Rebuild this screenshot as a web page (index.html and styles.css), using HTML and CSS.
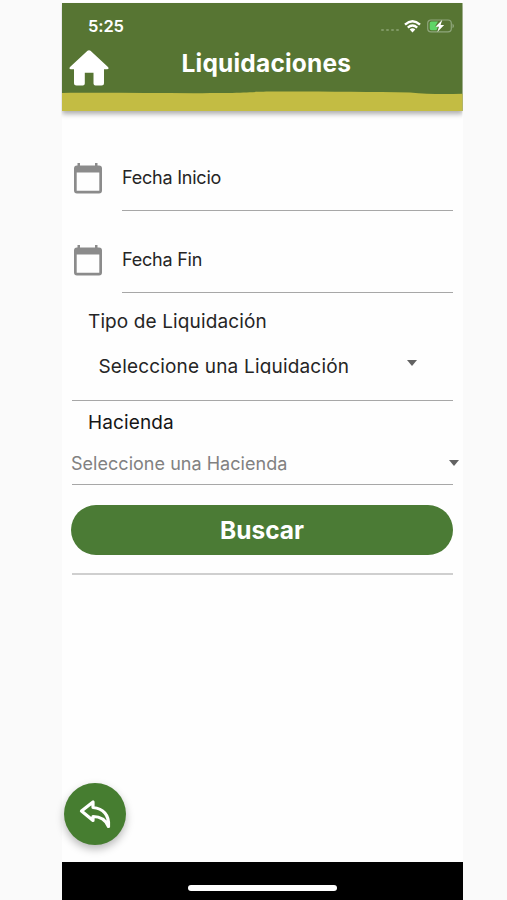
FILE: index.html
```html
<!DOCTYPE html>
<html lang="es">
<head>
<meta charset="utf-8">
<title>Liquidaciones</title>
<link rel="stylesheet" href="styles.css">
</head>
<body>
<div class="phone">
  <header class="header">
    <div class="status">
      <span class="time">5:25</span>
      <div class="indicators">
        <span class="dots"><i></i><i></i><i></i><i></i></span>
        <svg class="wifi" viewBox="0 0 17 13" width="17" height="13"><g fill="none" stroke="#fff" stroke-width="2.400"><path d="M1 4.700Q8.500-2 16 4.700"/><path d="M3.800 7.600Q8.500 3.500 13.200 7.600"/></g><path d="M5.700 9.400Q8.500 7.200 11.300 9.400L8.500 12.400Z" fill="#fff"/></svg>
        <svg class="battery" viewBox="0 0 28 14" width="28" height="14"><rect x=".7" y="1" width="23.600" height="11.800" rx="3.300" fill="none" stroke="#8fa67c" stroke-width="1.200"/><path d="M4.500 2.500H11L8 7.500H11L9.500 11.300H4.500Q2.700 11.300 2.700 9.500V4.300Q2.700 2.500 4.500 2.500Z" fill="#5fd567"/><path d="M25.500 4.500Q28.500 6.900 25.500 9.300Z" fill="#8fa67c"/><path d="M15.300.800 8.500 7.700H12L10.300 13 17.200 6H13.600Z" fill="#fff"/></svg>
      </div>
    </div>
    <div class="titlebar">
      <svg class="home" viewBox="0 0 40 36" width="40" height="36"><path d="M18.500.700Q20 0 21.500.700L39 17Q40.500 19 38 19.200H35V33Q35 35.500 32.500 35.500H26.500Q24.500 35.500 24.500 33.500V22.800H15.800V33.500Q15.800 35.500 13.800 35.500H7.500Q5 35.500 5 33V19.200H2Q-.500 19 1 17Z" fill="#fff"/></svg>
      <h1 class="title">Liquidaciones</h1>
    </div>
    <svg class="stripe" viewBox="0 0 401 20" width="401" height="20" preserveAspectRatio="none"><path d="M0 2C50 1.500 115 2.500 165 2 188 1.800 188 .6 215 .6 260 .5 310 1.200 348 1.400 365 3.200 382 3.200 401 2.700V20H0Z" fill="#c3bc43"/></svg>
  </header>
  <main class="form">
    <div class="date-row">
      <svg class="calendar" viewBox="0 0 30 32" width="30" height="32"><path fill-rule="evenodd" d="M4.500 1H7V3.500H22V1H24.500V3.500H26Q29 3.500 29 6.500V28.500Q29 31.500 26 31.500H4Q1 31.500 1 28.500V6.500Q1 3.500 4 3.500H4.500ZM3.700 10.500V28.700H26.300V10.500Z" fill="#8b8b8b"/></svg>
      <div class="date-input">Fecha Inicio</div>
    </div>
    <div class="date-row">
      <svg class="calendar" viewBox="0 0 30 32" width="30" height="32"><path fill-rule="evenodd" d="M4.500 1H7V3.500H22V1H24.500V3.500H26Q29 3.500 29 6.500V28.500Q29 31.500 26 31.500H4Q1 31.500 1 28.500V6.500Q1 3.500 4 3.500H4.500ZM3.700 10.500V28.700H26.300V10.500Z" fill="#8b8b8b"/></svg>
      <div class="date-input">Fecha Fin</div>
    </div>
    <div class="label">Tipo de Liquidación</div>
    <div class="select type"><span class="value">Seleccione una Liquidación</span><span class="caret"></span></div>
    <div class="label second">Hacienda</div>
    <div class="select estate"><span class="value">Seleccione una Hacienda</span><span class="caret"></span></div>
    <button class="search">Buscar</button>
    <div class="divider"></div>
  </main>
  <div class="bottom">
    <button class="fab" aria-label="Volver"><svg viewBox="0 0 34 30" width="34" height="30"><path d="M3.500 12 15 3V8.500C25 9.500 31.500 16 30.500 27.500 27.500 20.500 22 17.500 15 17.500V21.500Z" fill="none" stroke="#fff" stroke-width="3.200" stroke-linejoin="round"/></svg></button>
  </div>
  <footer class="homebar"><span class="grip"></span></footer>
</div>
</body>
</html>
```
FILE: styles.css
```css
* { box-sizing: border-box; }
body {
  margin: 0;
  background: #fafafa;
  color: #252525;
  font: 18px/24px Inter, sans-serif;
}
.phone {
  width: 401px;
  height: 900px;
  margin-left: 61.500px;
  padding-top: 2.500px;
  background: #fefefe;
  display: flex;
  flex-direction: column;
}
.header {
  height: 108px;
  flex: none;
  display: flex;
  flex-direction: column;
  background: #577533;
  color: #fff;
  box-shadow: 0 3px 5px rgba(0, 0, 0, .32);
  clip-path: inset(0 0 -12px 0);
}
.status {
  height: 44px;
  padding: 11px 8px 0 26.500px;
  display: flex;
  justify-content: space-between;
}
.time { font-size: 16.500px; font-weight: 600; letter-spacing: -.1px; }
.indicators { display: flex; height: 25px; align-items: center; }
.dots { display: flex; gap: 2.500px; padding-top: 8px; margin-right: 5px; }
.dots i { width: 2.500px; height: 2.500px; border-radius: 50%; background: #7f9965; }
.wifi { margin-right: 6px; }
.titlebar { height: 44px; display: flex; padding-left: 7px; }
.home { margin-top: 3px; }
.title { margin: 0 0 0 73px; font-size: 24.500px; line-height: 32px; font-weight: 700; letter-spacing: .2px; }
.stripe { display: block; flex: none; }
.form { padding: 33.500px 9.500px 0; display: flex; flex-direction: column; }
.date-row { height: 67px; margin-bottom: 15px; display: flex; gap: 19px; padding-left: 1.500px; }
.calendar { margin-top: 17.500px; flex: none; }
.date-input { flex: 1; margin-left: .5px; padding-top: 21.500px; border-bottom: 1px solid #a7a7a7; letter-spacing: -.22px; }
.label { padding-left: 17px; font-size: 19px; height: 24px; padding-top: 2px; letter-spacing: .12px; }
.select { display: flex; justify-content: space-between; margin-left: 1px; border-bottom: 1px solid #a7a7a7; }
.select.type { height: 69px; padding: 23px 36px 0 26.500px; font-size: 19px; letter-spacing: .18px; }
.type .value { height: 18.500px; overflow: hidden; }
.caret { width: 0; height: 0; border: 5.500px solid transparent; border-top: 6px solid #626262; border-bottom: 0; }
.type .caret { margin-top: 5px; }
.label.second { margin-top: 8px; color: #151515; }
.select.estate { height: 52px; padding-top: 19px; color: #818181; letter-spacing: .03px; }
.estate .value { margin-left: -1px; }
.estate .caret { margin: 8px -5.500px 0 0; }
.search {
  height: 50px;
  margin-top: 19.500px;
  border: 0;
  border-radius: 25px;
  background: #4b7b35;
  color: #fff;
  font: 700 24.500px Inter, sans-serif;
  padding: 0;
}
.divider { height: 2px; margin: 18.500px 0 0 1px; background: #cfcfcf; }
.bottom { flex: 1; display: flex; align-items: flex-end; padding: 0 0 17px 2.500px; }
.fab {
  width: 62px;
  height: 62px;
  padding: 0;
  border: 0;
  border-radius: 50%;
  background: #467d30;
  display: flex;
  align-items: center;
  justify-content: center;
  box-shadow: 0 4px 8px rgba(0, 0, 0, .28);
}
.homebar { height: 38px; flex: none; background: #000; display: flex; justify-content: center; padding-top: 23px; }
.grip { width: 149px; height: 6px; border-radius: 3px; background: #fff; }
```
